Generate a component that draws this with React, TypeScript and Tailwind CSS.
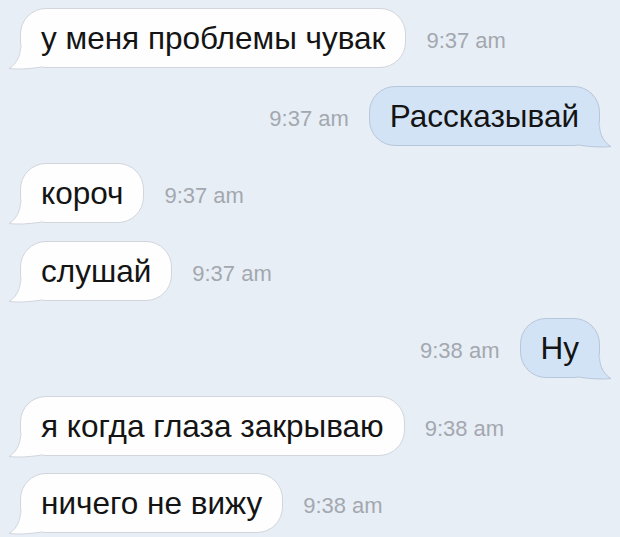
const messages = [
    {text: 'у меня проблемы чувак', time: '9:37 am', out: false},
    {text: 'Рассказывай', time: '9:37 am', out: true},
    {text: 'короч', time: '9:37 am', out: false},
    {text: 'слушай', time: '9:37 am', out: false},
    {text: 'Ну', time: '9:38 am', out: true},
    {text: 'я когда глаза закрываю', time: '9:38 am', out: false},
    {text: 'ничего не вижу', time: '9:38 am', out: false},
];

function Tail({out}: {out: boolean}) {
    const fill = out ? '#d3e3f6' : '#fefefe';
    const stroke = out ? '#b7c7db' : '#d2d6dc';
    return (
        <svg
            width="40"
            height="30"
            viewBox="0 0 40 30"
            className={out ? 'absolute right-[-15px] bottom-[-3px] -scale-x-100' : 'absolute left-[-15px] bottom-[-3px]'}
        >
            <path d="M14.5 8 C14 18 9 25 3 28.6 C12 29.5 22 29 34 27.3 L36 22 L18 7 Z" fill={fill}/>
            <path d="M14.5 8 C14 18 9 25 3 28.6 C12 29.5 22 29 34 27.3" fill="none" stroke={stroke} strokeWidth="1"/>
        </svg>
    );
}

function Bubble({text, out}: {text: string; out: boolean}) {
    return (
        <div
            className={
                out
                    ? 'relative h-[60px] rounded-[26px] border border-[#b7c7db] bg-[#d3e3f6] px-[20px] text-[31.5px] leading-[58px] text-[#141414]'
                    : 'relative h-[60px] rounded-[26px] border border-[#d2d6dc] bg-[#fefefe] px-[20px] text-[31.5px] leading-[58px] text-[#141414]'
            }
        >
            <Tail out={out}/>
            <span className="relative">{text}</span>
        </div>
    );
}

export default function App() {
    return (
        <div
            className="flex h-[537px] w-[620px] flex-col gap-[17.5px] overflow-hidden bg-[#e8eef6] pt-[8px]"
            style={{fontFamily: '"Liberation Sans", Arial, sans-serif'}}
        >
            {messages.map((m, i) => (
                <div
                    key={i}
                    className={m.out ? 'flex items-center justify-end gap-[20px] pr-[20px]' : 'flex items-center gap-[20px] pl-[20px]'}
                >
                    {m.out && <span className="pt-[5px] text-[22px] text-[#a3a8af]">{m.time}</span>}
                    <Bubble text={m.text} out={m.out}/>
                    {!m.out && <span className="pt-[5px] text-[22px] text-[#a3a8af]">{m.time}</span>}
                </div>
            ))}
        </div>
    );
}
